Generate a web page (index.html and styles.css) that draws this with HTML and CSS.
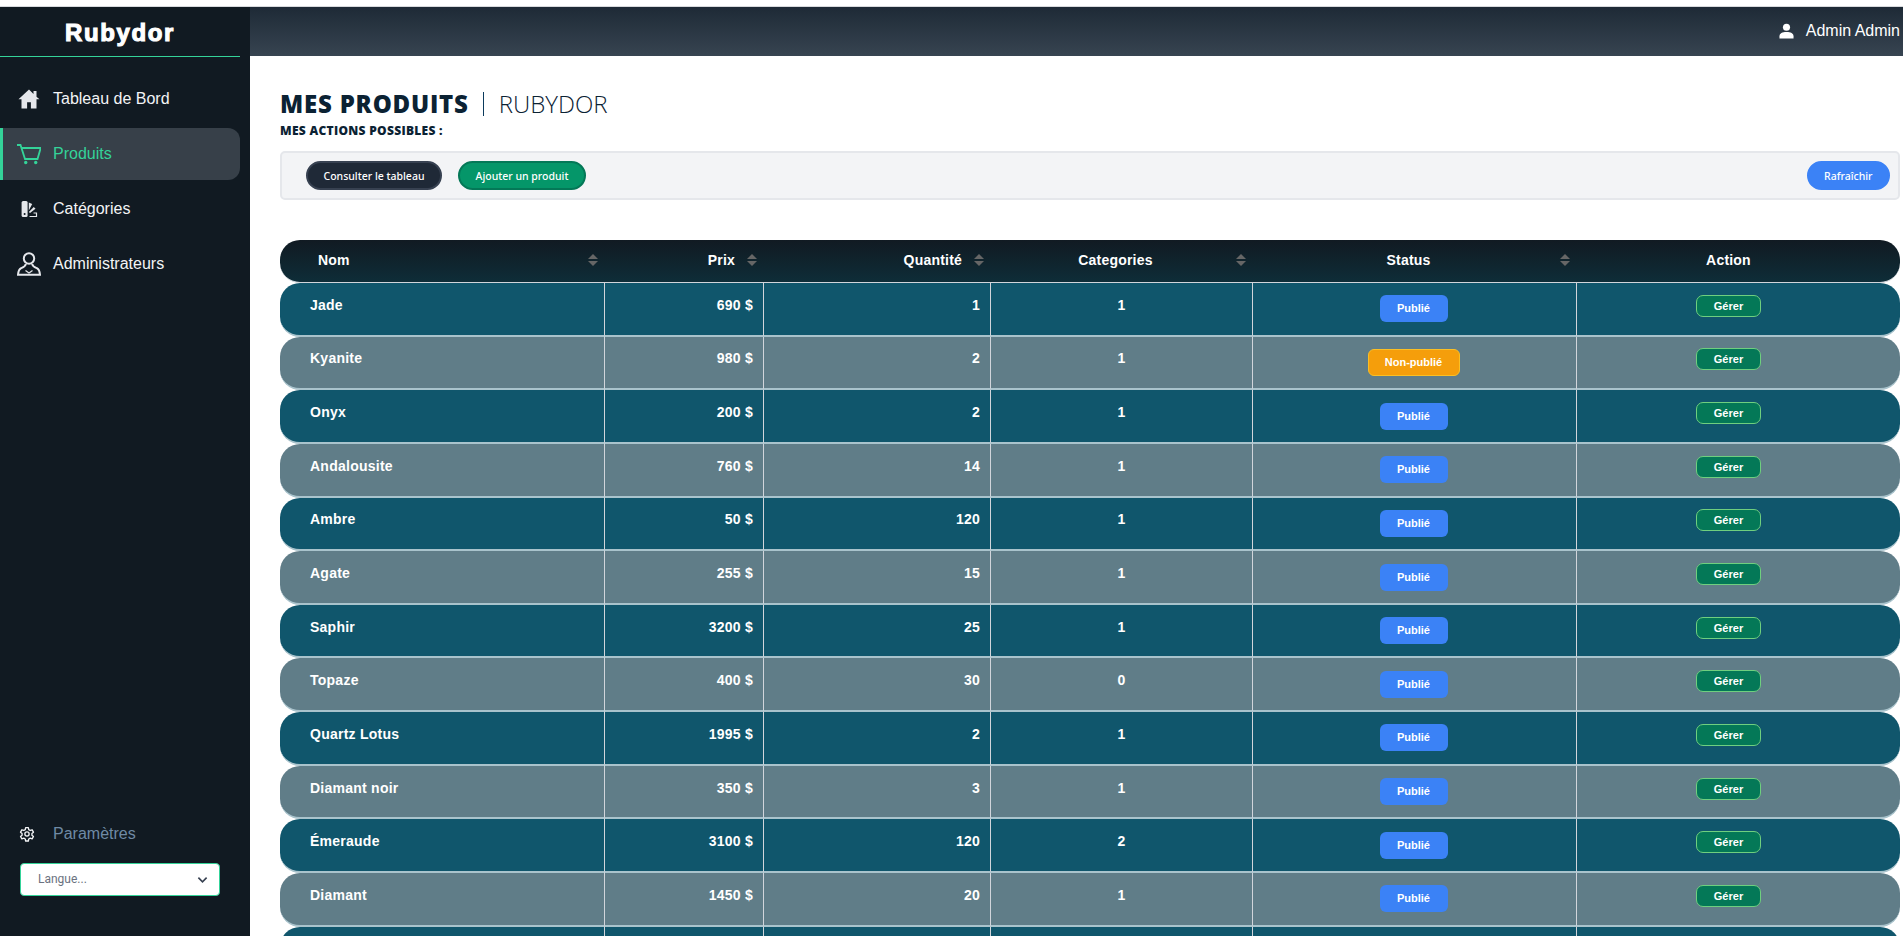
FILE: index.html
```html
<!DOCTYPE html>
<html lang="fr">
<head>
<meta charset="utf-8">
<title>Rubydor</title>
<link rel="stylesheet" href="styles.css">
</head>
<body>
<div class="app">
  <aside class="sidebar">
    <div class="brand">Rubydor</div>
    <nav class="nav">
      <a class="nav-item"><svg class="nav-icon" viewBox="0 0 24 24"><path fill="#e5e7eb" d="M12 2.600 1.500 12.200h3V21.500h5.600v-6.200h3.800v6.200h5.600v-9.300h3L19.500 9.800V4h-3v3.100z"/></svg><span>Tableau de Bord</span></a>
      <a class="nav-item active"><svg class="nav-icon" viewBox="0 0 24 24" fill="none" stroke="#34d399" stroke-width="1.800"><path d="M0 3h3.500l4.500 14h12.500l3.200-11H5"/><circle cx="8.700" cy="20.500" r="1.700" fill="#34d399" stroke="none"/><circle cx="18.700" cy="20.500" r="1.700" fill="#34d399" stroke="none"/></svg><span>Produits</span></a>
      <a class="nav-item"><svg class="nav-icon" viewBox="0 0 24 24"><rect x="4.600" y="4" width="6" height="16" rx="1.500" fill="#e5e7eb"/><circle cx="7.600" cy="17" r="1" fill="#111a22"/><path fill="#e5e7eb" d="M11.800 5.500l3.400 1.500-3.400 6.500zM11.800 15l5-5 1.700 1.700-5.500 4.300z"/><path fill="none" stroke="#e5e7eb" stroke-width="1.200" d="M12.500 19.500h7v-3.500h-3"/></svg><span>Catégories</span></a>
      <a class="nav-item"><svg class="nav-icon" viewBox="0 0 24 24" fill="none" stroke="#e5e7eb" stroke-width="2"><circle cx="12" cy="6.500" r="5.200"/><path d="M8.800 12c-.3 2.500-2.300 3.200-4.800 4.200C2 17 1.300 19.500 1 22.800h22c-.3-3.300-1-5.800-3-6.600-2.500-1-4.500-1.700-4.800-4.200"/><path d="M8.500 18.500l3.500 2.500 3.500-2.500" stroke-width="1.300"/></svg><span>Administrateurs</span></a>
    </nav>
    <div class="sidebar-foot">
      <a class="settings"><svg class="gear" viewBox="0 0 24 24" fill="none" stroke="#f3f4f6" stroke-width="2" stroke-linejoin="round"><path d="M10 2.500h4l.6 3 2.200 1.200 2.900-1 2 3.500-2.300 2v2.600l2.300 2-2 3.500-2.900-1-2.200 1.200-.6 3h-4l-.6-3-2.200-1.200-2.900 1-2-3.500 2.300-2v-2.600l-2.300-2 2-3.500 2.900 1 2.200-1.200z"/><circle cx="12" cy="12" r="3.200"/></svg><span>Paramètres</span></a>
      <div class="lang"><span>Langue...</span><svg class="chev" viewBox="0 0 12 8" fill="none" stroke="#374151" stroke-width="1.800"><path d="M1.500 1.500 6 6l4.500-4.500"/></svg></div>
    </div>
  </aside>
  <div class="main">
    <header class="topbar"><svg class="user" viewBox="0 0 16 16"><circle cx="8" cy="4" r="3.800" fill="#fff"/><path fill="#fff" d="M.5 16v-2.500C.5 10.500 3.500 9 8 9s7.500 1.500 7.500 4.500V16z"/></svg><span>Admin Admin</span></header>
    <main class="content">
      <h1 class="title"><b>MES PRODUITS</b><i class="sep"></i><span>RUBYDOR</span></h1>
      <p class="subtitle">MES ACTIONS POSSIBLES :</p>
      <div class="actions">
        <button class="btn dark">Consulter le tableau</button>
        <button class="btn green">Ajouter un produit</button>
        <button class="btn blue">Rafraîchir</button>
      </div>
      <table class="table">
        <colgroup><col class="c1"><col class="c2"><col class="c3"><col class="c4"><col class="c5"><col class="c6"></colgroup>
        <thead><tr>
          <th class="h-name"><span>Nom</span><i class="sort"></i></th>
          <th class="h-end"><span>Prix</span><i class="sort"></i></th>
          <th class="h-end"><span>Quantité</span><i class="sort"></i></th>
          <th class="h-center"><span>Categories</span><i class="sort"></i></th>
          <th class="h-center"><span>Status</span><i class="sort"></i></th>
          <th class="h-action">Action</th>
        </tr></thead>
        <tbody id="rows">
          <tr><td>Jade</td><td>690 $</td><td>1</td><td>1</td><td><em class="pub">Publié</em></td><td><em class="manage">Gérer</em></td></tr>
          <tr><td>Kyanite</td><td>980 $</td><td>2</td><td>1</td><td><em class="non">Non-publié</em></td><td><em class="manage">Gérer</em></td></tr>
          <tr><td>Onyx</td><td>200 $</td><td>2</td><td>1</td><td><em class="pub">Publié</em></td><td><em class="manage">Gérer</em></td></tr>
          <tr><td>Andalousite</td><td>760 $</td><td>14</td><td>1</td><td><em class="pub">Publié</em></td><td><em class="manage">Gérer</em></td></tr>
          <tr><td>Ambre</td><td>50 $</td><td>120</td><td>1</td><td><em class="pub">Publié</em></td><td><em class="manage">Gérer</em></td></tr>
          <tr><td>Agate</td><td>255 $</td><td>15</td><td>1</td><td><em class="pub">Publié</em></td><td><em class="manage">Gérer</em></td></tr>
          <tr><td>Saphir</td><td>3200 $</td><td>25</td><td>1</td><td><em class="pub">Publié</em></td><td><em class="manage">Gérer</em></td></tr>
          <tr><td>Topaze</td><td>400 $</td><td>30</td><td>0</td><td><em class="pub">Publié</em></td><td><em class="manage">Gérer</em></td></tr>
          <tr><td>Quartz Lotus</td><td>1995 $</td><td>2</td><td>1</td><td><em class="pub">Publié</em></td><td><em class="manage">Gérer</em></td></tr>
          <tr><td>Diamant noir</td><td>350 $</td><td>3</td><td>1</td><td><em class="pub">Publié</em></td><td><em class="manage">Gérer</em></td></tr>
          <tr><td>Émeraude</td><td>3100 $</td><td>120</td><td>2</td><td><em class="pub">Publié</em></td><td><em class="manage">Gérer</em></td></tr>
          <tr><td>Diamant</td><td>1450 $</td><td>20</td><td>1</td><td><em class="pub">Publié</em></td><td><em class="manage">Gérer</em></td></tr>
          <tr><td></td><td></td><td></td><td></td><td></td><td></td></tr>
        </tbody>
      </table>
    </main>
  </div>
</div>
</body>
</html>
```
FILE: styles.css
```css
* { box-sizing: border-box; }
html, body { margin: 0; height: 936px; overflow: hidden; background: #fff; }
body { font-family: "Liberation Sans", Arial, sans-serif; }
.app { display: flex; height: 936px; padding-top: 7px; position: relative; }
.app::before { content: ""; position: absolute; left: 0; right: 0; top: 6px; height: 1px; background: #d8dadd; }
.sidebar { width: 250px; flex: none; background: #111a22; display: flex; flex-direction: column; color: #f3f4f6; }
.brand { height: 50px; width: 240px; border-bottom: 1px solid #34d399; font: 700 24px/52px "Liberation Sans", sans-serif; -webkit-text-stroke: 1.1px #fff; letter-spacing: 1.6px; text-align: center; color: #fff; }
.nav { display: flex; flex-direction: column; margin-top: 16px; width: 240px; }
.nav-item { height: 52px; margin-bottom: 3px; display: flex; align-items: center; font-size: 16px; color: #f3f4f6; padding-left: 17px; }
.nav-item span { margin-left: 12px; }
.nav-icon { width: 24px; height: 24px; flex: none; }
.nav-item.active { background: #374049; border-left: 3px solid #34d399; border-radius: 0 12px 12px 0; padding-left: 14px; color: #34d399; }
.sidebar-foot { margin-top: auto; padding: 0 0 40px 20px; }
.settings { display: flex; align-items: center; font-size: 16px; color: #6f8aa5; height: 24px; margin-bottom: 17px; }
.gear { width: 16px; height: 16px; margin-right: 18px; margin-left: -1px; }
.lang { width: 200px; height: 33px; background: #fff; border: 1px solid #34d399; border-radius: 4px; display: flex; align-items: center; justify-content: space-between; padding: 0 11px 2px 17px; font: 12px "Roboto", sans-serif; color: #6b7280; }
.chev { width: 11px; height: 8px; margin-top: 2px; }
.main { flex: 1; min-width: 0; display: flex; flex-direction: column; }
.topbar { height: 49px; flex: none; background: linear-gradient(#1e2a36, #374451); display: flex; align-items: center; justify-content: flex-end; color: #fff; font-size: 16px; padding: 0 3px 2px 0; }
.user { width: 15px; height: 16px; margin-right: 12px; }
.content { padding: 0 3px 0 30px; }
.title { margin: 34px 0 0; font: 300 24px/28px "Open Sans", sans-serif; color: #0b2233; display: flex; align-items: center; }
.title b { font-weight: 800; letter-spacing: .8px; }
.sep { width: 1px; height: 24px; background: #0b3a5c; margin: 0 15px 0 14px; }
.subtitle { margin: 5px 0 0; font: 800 12px/16px "Open Sans", sans-serif; color: #0b2233; letter-spacing: .3px; }
.actions { margin-top: 12px; height: 49px; background: #f3f4f6; border: 2px solid #e5e7eb; border-radius: 5px; display: flex; align-items: center; gap: 16px; padding: 0 8px 0 24px; }
.btn { height: 29px; border-radius: 15px; border: 2px solid; font: 500 10.500px "Noto Sans", sans-serif; color: #fff; padding: 0 15.500px; }
.dark { background: #1f2937; border-color: #374151; }
.green { background: #059669; border-color: #047857; }
.blue { background: #3b82f6; border-color: #3b82f6; margin-left: auto; }
.table { margin-top: 40px; width: 1620px; table-layout: fixed; border-collapse: separate; border-spacing: 0; color: #fff; font-size: 14px; font-weight: 700; }
.c1 { width: 325px; } .c2 { width: 159px; } .c3 { width: 227px; } .c4 { width: 262px; } .c5 { width: 324px; } .c6 { width: 323px; }
thead th { height: 43px; padding: 0 0 2px; background: linear-gradient(#111a22, #0e2d38); border-bottom: 1px solid #d1d5db; font-size: 14px; letter-spacing: .2px; position: relative; font-weight: 700; }
thead th:first-child { border-radius: 20px 0 0 20px; }
thead th:last-child { border-radius: 0 20px 20px 0; }
.h-name { text-align: left; padding-left: 38px; }
.h-end { text-align: right; padding-right: 29px; }
.h-center { text-align: center; padding-right: 13px; }
.h-action { padding-right: 20px; }
.sort { position: absolute; right: 7px; top: 14px; width: 10px; height: 12px; }
.sort::before, .sort::after { content: ""; position: absolute; left: 0; width: 0; height: 0; border-left: 5px solid transparent; border-right: 5px solid transparent; }
.sort::before { top: 0; border-bottom: 5px solid #666; }
.sort::after { bottom: 0; border-top: 5px solid #666; }
tbody tr td { height: 53.650px; padding: 0 10px 8px; background: #10566c; border-right: 1px solid #d1d5db; border-bottom: 2px solid #a9c3cc; vertical-align: middle; letter-spacing: .25px; }
tbody tr:nth-child(even) td { background: #607d88; }
tbody td:first-child { padding-left: 30px; border-radius: 20px 0 0 20px; }
tbody td:last-child { border-right: 0; border-radius: 0 20px 20px 0; }
tbody td:nth-child(2), tbody td:nth-child(3) { text-align: right; }
tbody td:nth-child(4), tbody td:nth-child(5), tbody td:nth-child(6) { text-align: center; }
tbody td:nth-child(5) { padding: 0 12px 0 10px; letter-spacing: 0; }
tbody td:nth-child(6) { padding: 0 30px 0 10px; letter-spacing: 0; }
em { font-style: normal; display: inline-block; }
.pub { background: #3b82f6; border-radius: 6px; width: 68px; height: 27px; font-size: 11px; line-height: 27px; }
.non { background: #f59e0b; border: 1px solid #fbbf24; border-radius: 6px; width: 92px; height: 27px; font-size: 11px; line-height: 25px; }
.manage { background: #047857; border: 1px solid #6fcf7f; border-radius: 7px; width: 65px; height: 22px; font-size: 11px; line-height: 20px; margin-bottom: 6px; }
```
